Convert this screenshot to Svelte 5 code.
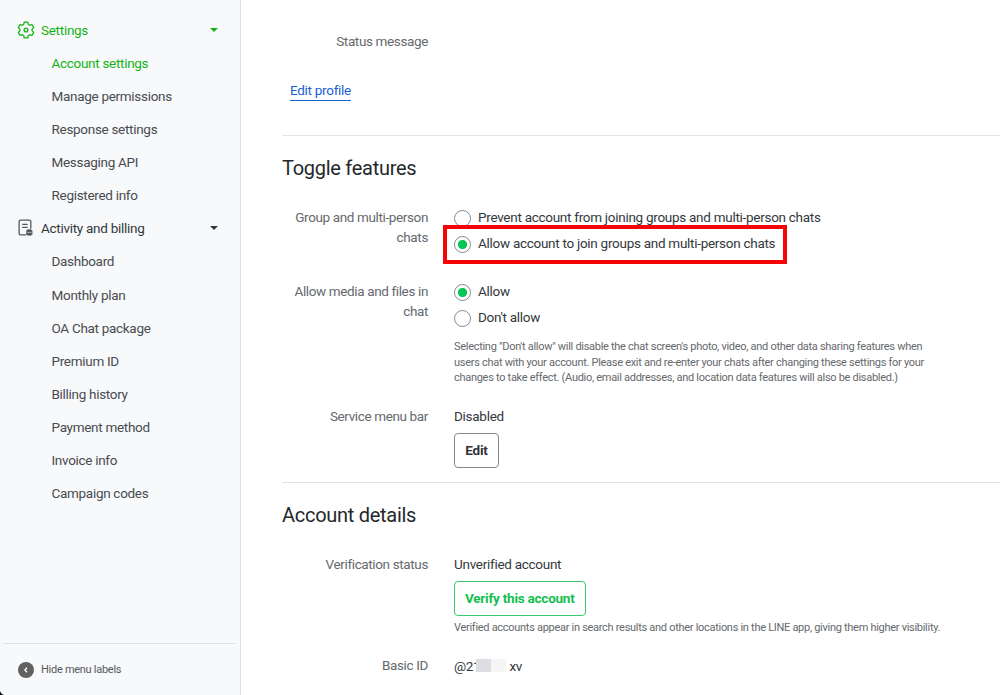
<script lang="ts">
  type Option = { value: string; label: string };

  let current = $state('Account settings');
  let groupChat = $state('allow');
  let media = $state('allow');

  const settings = ['Account settings', 'Manage permissions', 'Response settings', 'Messaging API', 'Registered info'];
  const billing = [
    'Dashboard',
    'Monthly plan',
    'OA Chat package',
    'Premium ID',
    'Billing history',
    'Payment method',
    'Invoice info',
    'Campaign codes'
  ];

  const groupOptions: Option[] = [
    { value: 'prevent', label: 'Prevent account from joining groups and multi-person chats' },
    { value: 'allow', label: 'Allow account to join groups and multi-person chats' }
  ];
  const mediaOptions: Option[] = [
    { value: 'allow', label: 'Allow' },
    { value: 'deny', label: "Don't allow" }
  ];
</script>

{#snippet items(list: string[])}
  {#each list as item}
    <button class="item" class:active={item === current} onclick={() => (current = item)}>{item}</button>
  {/each}
{/snippet}

<div class="layout">
  <aside>
    <nav>
      <div class="group active">
        <svg width="18" height="18" viewBox="0 0 18 18" fill="none" stroke="currentColor" stroke-width="1.3" stroke-linejoin="round">
          <path d="M7.2 1.2h3.6l.5 2.2 1.5.9 2.1-.8 1.8 3.1-1.6 1.5v1.8l1.6 1.5-1.8 3.1-2.1-.8-1.5.9-.5 2.2H7.2l-.5-2.2-1.5-.9-2.1.8-1.8-3.1 1.6-1.5V8.1L1.3 6.6l1.8-3.1 2.1.8 1.5-.9z" />
          <circle cx="9" cy="9" r="1.9" />
        </svg>
        <span>Settings</span>
        <i class="caret"></i>
      </div>
      {@render items(settings)}
      <div class="group">
        <svg width="18" height="18" viewBox="0 0 18 18" fill="none" stroke="currentColor" stroke-width="1.3">
          <path d="M8.6 15.9h-5a1.5 1.5 0 0 1-1.5-1.5V2.6a1.5 1.5 0 0 1 1.5-1.5h8.7a1.5 1.5 0 0 1 1.5 1.5v6.6" stroke-linecap="round" />
          <path d="M5.2 5.4h5.5M5.2 8.4h5.5" />
          <path d="M9.1 12c0-2.200 6.400-2.200 6.400 0v3c0 2.200-6.400 2.200-6.400 0z" fill="currentColor" stroke="none" />
          <path d="M9.1 12.800c1.200 1 5.200 1 6.400 0" stroke="#f8f9fb" stroke-width=".5" />
        </svg>
        <span>Activity and billing</span>
        <i class="caret"></i>
      </div>
      {@render items(billing)}
    </nav>
    <button class="collapse">
      <svg width="16" height="16" viewBox="0 0 16 16">
        <circle cx="8" cy="8" r="8" fill="#616161" />
        <path d="M9 5.8 6.900 8 9 10.200" fill="none" stroke="#fff" stroke-width="1.300" />
      </svg>
      <span>Hide menu labels</span>
    </button>
    <span class="corner"></span>
  </aside>

  <main>
    <section class="profile">
      <div class="row"><div class="label">Status message</div></div>
      <a href="#profile">Edit profile</a>
    </section>

    <section class="features">
      <h2>Toggle features</h2>
      <div class="row">
        <div class="label">Group and multi-person chats</div>
        <div class="field">
          {#each groupOptions as option}
            <label class="option" class:marked={option.value === 'allow'}>
              <input type="radio" value={option.value} bind:group={groupChat} />
              <span>{option.label}</span>
            </label>
          {/each}
        </div>
      </div>
      <div class="row media">
        <div class="label">Allow media and files in chat</div>
        <div class="field">
          {#each mediaOptions as option}
            <label class="option">
              <input type="radio" value={option.value} bind:group={media} />
              <span>{option.label}</span>
            </label>
          {/each}
          <p class="help">
            Selecting "Don't allow" will disable the chat screen's photo, video, and other data sharing features when<br />
            users chat with your account. Please exit and re-enter your chats after changing these settings for your<br />
            changes to take effect. (Audio, email addresses, and location data features will also be disabled.)
          </p>
        </div>
      </div>
      <div class="row service">
        <div class="label">Service menu bar</div>
        <div class="field">
          <div class="value">Disabled</div>
          <button class="btn">Edit</button>
        </div>
      </div>
    </section>

    <section class="details">
      <h2>Account details</h2>
      <div class="row">
        <div class="label">Verification status</div>
        <div class="field">
          <div class="value">Unverified account</div>
          <button class="btn verify">Verify this account</button>
          <p class="help">Verified accounts appear in search results and other locations in the LINE app, giving them higher visibility.</p>
        </div>
      </div>
      <div class="row basic">
        <div class="label">Basic ID</div>
        <div class="field id">@21<span class="mask"></span>xv</div>
      </div>
    </section>
  </main>
</div>

<style>
  :global(body) { margin: 0; background: #fff; overflow: hidden; }
  .layout { display: flex; height: 695px; overflow: hidden; color: #34383c; font: 13.5px/20px Roboto, sans-serif; letter-spacing: -.28px; }
  button { font-family: inherit; letter-spacing: inherit; cursor: pointer; }

  aside { position: relative; box-sizing: border-box; width: 241px; flex: none; display: flex; flex-direction: column; justify-content: space-between; background: #f8f9fb; border-right: 1px solid #e0e1e3; }
  nav { display: flex; flex-direction: column; padding-top: 13px; }
  .group, .item { height: 33.13px; box-sizing: border-box; display: flex; align-items: center; }
  .group { padding: 0 22px 0 17px; color: #34383c; }
  .group svg { flex: none; margin-right: 6px; }
  .group:not(.active) svg { color: #55585c; }
  .caret { margin-left: auto; border: solid transparent; border-width: 4px 4.5px 0; border-top-color: currentColor; }
  .item { padding: 0 0 0 51.5px; border: 0; background: none; color: #484c50; font-size: 13.5px; letter-spacing: -.3px; text-align: left; }
  .group.active, .item.active { color: #14b414; }
  .collapse { display: flex; align-items: center; gap: 7px; height: 52px; margin: 0 4px 0 3px; padding: 0 0 0 15px; border: 0; border-top: 1px solid #e0e1e3; background: none; color: #55585c; font-size: 11px; }
  .corner { position: absolute; left: 0; bottom: 0; width: 5px; height: 5px; background: radial-gradient(circle at 100% 0, transparent 4.5px, #000 5.5px); }

  main { flex: 1; min-width: 0; padding-left: 41px; }
  section { box-sizing: border-box; border-bottom: 1px solid #e3e3e3; }
  .profile { height: 136px; padding-top: 32px; }
  .profile a { display: inline-block; margin: 28px 0 0 8px; border-bottom: 1px solid #1b5fd0; color: #1b5fd0; text-decoration: none; }
  .features { height: 347px; }
  .details { height: 230px; }
  h2 { margin: 0; padding: 20px 0 28px; font-size: 20px; font-weight: 400; line-height: 24px; color: #25282b; }
  .row { display: flex; gap: 26px; }
  .label { width: 146px; flex: none; box-sizing: border-box; padding-left: 10px; color: #66696d; line-height: 19.5px; letter-spacing: -.37px; text-align: right; }
  .media { margin-top: 28px; }
  .service { margin-top: 21px; }
  .basic { margin-top: 20px; }
  .field { flex: 1; }
  .value { height: 20px; line-height: 18px; }

  .option { position: relative; display: flex; align-items: center; width: max-content; height: 20px; gap: 7px; }
  .option + .option { margin-top: 6px; }
  .option span { padding-bottom: 2px; }
  input { appearance: none; box-sizing: border-box; width: 17px; height: 17px; margin: 0; border: 1px solid #85888b; border-radius: 50%; background: #fff; }
  input:checked { background: radial-gradient(circle, #06c755 4.2px, #fff 5px); }
  .marked::after { content: ''; position: absolute; inset: -9px -12px -10px -11px; border: 4px solid #f50505; }

  .help { margin: 11px 0 0; color: #66696c; font-size: 11px; line-height: 15.5px; letter-spacing: -.29px; }
  .btn { display: block; box-sizing: border-box; height: 35px; margin-top: 6px; padding: 0 10px 1px; border: 1px solid #85888b; border-radius: 4px; background: #fff; color: #303438; font-size: 13.5px; font-weight: 700; letter-spacing: -.23px; }
  .service .btn { width: 45px; }
  .verify { border-color: #35c86f; color: #12bf50; }
  .verify + .help { margin-top: 4px; }
  .id { display: flex; letter-spacing: -.3px; }
  .mask { width: 30px; height: 13px; margin: 3px 3px 0 -4px; background: linear-gradient(90deg, #dfdde4 15px, #f5f5f4 15px); }
</style>
